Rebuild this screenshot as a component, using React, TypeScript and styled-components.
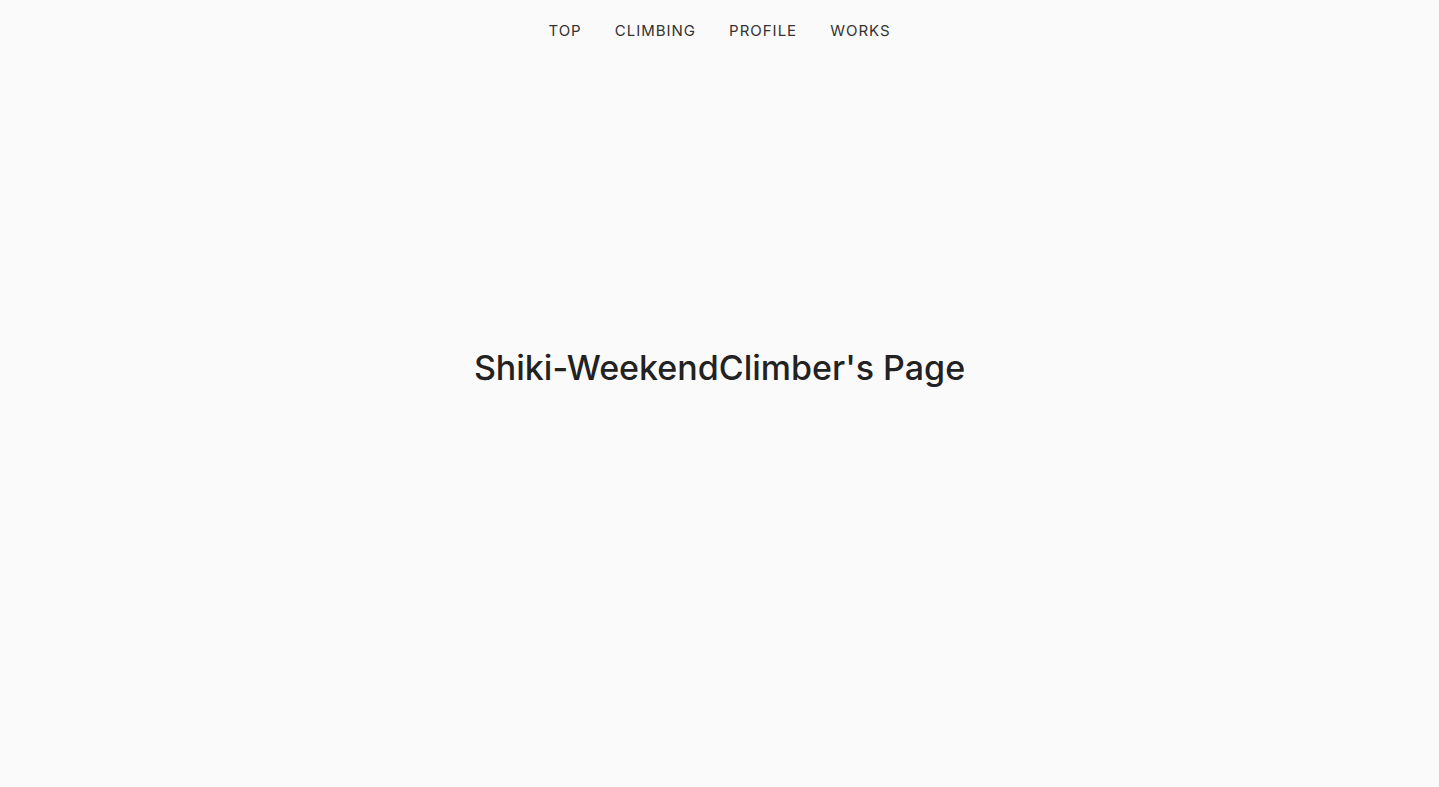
import React from "react";
import styled, { createGlobalStyle } from "styled-components";

const Global = createGlobalStyle`
  html, body { margin: 0; padding: 0; background: #fafafa; }
  body { font-family: "Inter", "Noto Sans", sans-serif; color: #222; }
`;

const Page = styled.div`
  min-height: 787px;
  display: flex;
  flex-direction: column;
  background: #fafafa;
`;

const Nav = styled.nav`
  display: flex;
  justify-content: center;
  gap: 33px;
  padding-top: 20px;
  height: 40px;
`;

const NavLink = styled.a`
  font-family: "Inter", "Noto Sans", sans-serif;
  font-size: 15px;
  letter-spacing: 1px;
  color: #333;
  text-decoration: none;
  line-height: 22px;
`;

const Hero = styled.section`
  height: 614px;
  display: flex;
  align-items: center;
  justify-content: center;
  padding-bottom: 0;
  box-sizing: border-box;
`;

const Title = styled.h1`
  margin: 0;
  font-family: "Inter", "Noto Sans", sans-serif;
  font-weight: 500;
  font-size: 34px;
  color: #222;
`;

export default function App() {
  return (
    <Page>
      <Global />
      <Nav>
        {["TOP", "CLIMBING", "PROFILE", "WORKS"].map((l) => (
          <NavLink key={l} href="#">{l}</NavLink>
        ))}
      </Nav>
      <Hero>
        <Title>Shiki-WeekendClimber's Page</Title>
      </Hero>
    </Page>
  );
}
